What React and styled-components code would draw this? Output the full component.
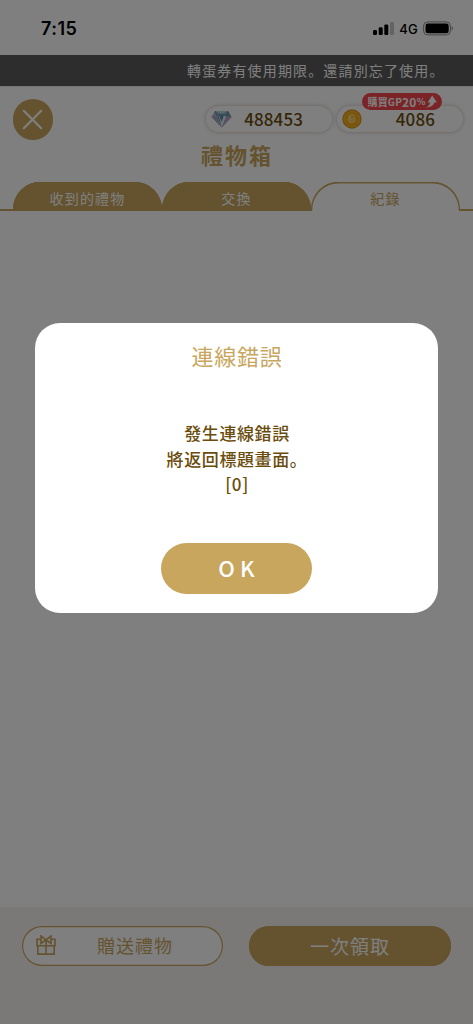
import React from "react";
import styled, { createGlobalStyle } from "styled-components";

const gold = "#c8a65d";
const brown = "#6b4c0c";

const GlobalStyle = createGlobalStyle`
  * { box-sizing: border-box; }
  body { margin: 0; background: #fff; }
  button { font: inherit; border: 0; padding: 0; margin: 0; }
`;

const Screen = styled.div`
  position: relative;
  display: flex;
  flex-direction: column;
  width: 473px;
  height: 1024px;
  overflow: hidden;
  background: #fff;
  font-family: "Noto Sans CJK JP", sans-serif;
  font-weight: 400;
`;

const StatusBar = styled.div`
  display: flex;
  align-items: center;
  justify-content: space-between;
  height: 55px;
  padding: 2px 19px 0 41px;
  font-family: Inter, sans-serif;
  color: #000;
`;
const Clock = styled.span`
  font-size: 18px;
  font-weight: 600;
  letter-spacing: 0.5px;
`;
const Signals = styled.div`
  display: flex;
  align-items: center;
  font-size: 13px;
  font-weight: 500;
`;
const Network = styled.span`
  margin: 0 5px 0 5px;
  letter-spacing: 0.2px;
`;

const Notice = styled.div`
  height: 31px;
  padding-left: 187px;
  background: #5a5a5a;
  color: #fff;
  font-size: 14px;
  line-height: 31px;
  letter-spacing: 1.15px;
  white-space: nowrap;
`;

const Header = styled.header`
  display: flex;
  flex-direction: column;
  height: 125px;
  border-top: 1px solid #ececec;
`;
const HeaderTop = styled.div`
  display: flex;
  align-items: flex-start;
  height: 53px;
  padding: 12px 10px 0 12.5px;
`;
const CloseButton = styled.button`
  display: grid;
  place-items: center;
  flex: none;
  width: 40.5px;
  height: 40.5px;
  margin-right: 153px;
  border-radius: 50%;
  background: ${gold};
`;
const Balance = styled.div`
  position: relative;
  display: flex;
  flex: none;
  align-items: center;
  width: 126px;
  height: 26px;
  margin-top: 7px;
  padding-left: 5px;
  border-radius: 13px;
  background: #fff;
  box-shadow: 0 0 4px rgba(120, 95, 65, 0.38);
  color: ${brown};
  font-size: 17px;
  font-weight: 500;
  line-height: 24px;
  letter-spacing: 0.1px;

  & + & {
    margin-left: 5px;
  }
`;
const Amount = styled.span`
  flex: 1;
  padding: 0 ${(p) => p.$inset}px 2px 0;
  line-height: 17px;
  text-align: right;
`;
const Promo = styled.div`
  position: absolute;
  top: -13px;
  left: 25px;
  display: flex;
  align-items: center;
  justify-content: center;
  width: 80px;
  height: 17px;
  border-radius: 9px;
  background: #f5484e;
  color: #fff;
  font-size: 10px;
  font-weight: 700;
  line-height: 12px;
  letter-spacing: 0.2px;
  white-space: nowrap;
`;
const Rate = styled.span`
  font-size: ${(p) => p.$size}px;
`;
const Title = styled.h1`
  margin: 0;
  height: 42px;
  padding-left: 1px;
  color: ${gold};
  font-size: 22px;
  font-weight: 700;
  line-height: 28px;
  letter-spacing: 2px;
  text-align: center;
`;

const Tabs = styled.nav`
  display: flex;
  align-items: flex-end;
  height: 29px;
`;
const TabRule = styled.span`
  width: ${(p) => p.$width}px;
  height: 2px;
  background: ${gold};
`;
const Tab = styled.button`
  width: 149px;
  height: 29px;
  padding-top: 3px;
  border-radius: 27px 27px 0 0;
  background: ${(p) => (p.$active ? "#fff" : gold)};
  box-shadow: inset 1.2px 1.2px ${gold}, inset -1.2px 1.2px ${gold};
  color: ${(p) => (p.$active ? gold : "#fff")};
  font-size: 14px;
  line-height: 24px;
  letter-spacing: 1.2px;
`;

const Content = styled.main`
  flex: 1;
`;

const Footer = styled.footer`
  display: flex;
  justify-content: space-between;
  align-items: flex-start;
  height: 117px;
  padding: 19px 22px;
  background: #f6f3f0;
`;
const FooterButton = styled.button`
  display: flex;
  align-items: center;
  justify-content: center;
  width: ${(p) => (p.$filled ? 202 : 201)}px;
  height: 40px;
  padding-bottom: 2px;
  border-radius: 20px;
  background: ${(p) => (p.$filled ? gold : "#fff")};
  box-shadow: inset 0 0 0 1.2px ${gold};
  color: ${(p) => (p.$filled ? "#fff" : gold)};
  font-size: ${(p) => (p.$filled ? 19 : 18)}px;
  letter-spacing: 1px;
`;
const GiftLabel = styled.span`
  margin: 0 36px 0 41px;
`;

const Overlay = styled.div`
  position: absolute;
  inset: 0;
  display: flex;
  justify-content: center;
  align-items: flex-start;
  padding-top: 323px;
  background: rgba(0, 0, 0, 0.5);
`;
const Dialog = styled.section`
  display: flex;
  flex-direction: column;
  align-items: center;
  width: 403px;
  height: 290px;
  border-radius: 25px;
  background: #fff;
`;
const DialogTitle = styled.h2`
  margin: 16px 0 0;
  padding: 0 0 1px 1px;
  color: ${gold};
  font-size: 22px;
  font-weight: 400;
  line-height: 33px;
  letter-spacing: 0.8px;
`;
const Message = styled.p`
  margin: 47px 0 0;
  padding-left: 1px;
  color: ${brown};
  font-size: 17px;
  font-weight: 500;
  line-height: 25.5px;
  letter-spacing: 0.6px;
  text-align: center;
  white-space: pre;
`;
const ConfirmButton = styled.button`
  width: 151px;
  height: 51px;
  margin-top: 46.5px;
  padding-bottom: 3px;
  border-radius: 26px;
  background: ${gold};
  color: #fff;
  font-size: 22px;
  font-weight: 500;
  line-height: 48px;
  letter-spacing: 0.1px;
`;

const CellularIcon = () => (
  <svg width="21" height="13" viewBox="0 0 21 13">
    <rect x="0" y="8" width="4" height="5" rx="1.2" />
    <rect x="5.7" y="5.3" width="4" height="7.7" rx="1.2" />
    <rect x="11.3" y="2.6" width="4" height="10.4" rx="1.2" />
    <rect x="17" y="0" width="4" height="13" rx="1.2" fill="#c7c7c7" />
  </svg>
);

const BatteryIcon = () => (
  <svg width="31" height="15" viewBox="0 0 31 15">
    <rect x=".6" y=".9" width="26.8" height="13" rx="4" fill="none" stroke="#888" strokeWidth="1" />
    <rect x="2.5" y="2.6" width="23.2" height="9.7" rx="2.3" />
    <path d="M28.7 5.3v4.2c1.7-.7 1.7-3.5 0-4.2z" fill="#888" />
  </svg>
);

const CloseIcon = () => (
  <svg width="21" height="21" viewBox="0 0 21 21" stroke="#fff" strokeWidth="2.2" strokeLinecap="round">
    <path d="M1.8 1.8 19.2 19.2M19.2 1.8 1.8 19.2" />
  </svg>
);

const DiamondIcon = () => (
  <svg width="21" height="18" viewBox="0 0 21 18">
    <path d="M4.2 1h12.7L20.5 7 10.7 17.5.6 7z" fill="#8badbf" />
    <path d="M4.2 1 .6 7 6 6.2z" fill="#c3a9c8" />
    <path d="m4.2 1 6.4 3.2L16.9 1z" fill="#b4d4dc" />
    <path d="M5.4 6.4h3l2.3 5.6 1.6-6h3l-4.6 11.5z" fill="#e2eff4" />
    <path d="m6 6.8 1.8 0 2.9 9z" fill="#547f9b" />
    <path d="m8.5 6.4 2.1-2 2 1.8-1.7 5.2z" fill="#5f8aa4" />
    <path d="m16.9 1-1.6 5.2 5.2.8z" fill="#7499b0" />
    <path d="m.6 7 4.9-.6 5.2 11.1z" fill="#a9a3bd" />
    <path d="m15.3 6.2 5.2.8-9.8 10.5z" fill="#b5a0bd" />
    <path d="m10.6 4-4.6 2.2L4.2 1M10.6 4l4.7 2.2L16.9 1" fill="none" stroke="#56869c" strokeWidth=".8" />
  </svg>
);

const CoinIcon = () => (
  <svg width="20" height="20" viewBox="0 0 20 20">
    <circle cx="10" cy="10" r="9.7" fill="#e09410" />
    <circle cx="10" cy="10" r="8" fill="#f3ad1c" stroke="#f8bf3a" strokeWidth=".8" />
    <path d="M10.5 5.2c-3 0-5 2.2-4.8 5 .2 2.4 1.8 4 4.2 4.3l3.6-2.3V9l-2-.6 1.7-1.5z" fill="#fbd368" />
    <path d="M9 8.4l2.6-.9M9.4 11.6l1.8-.7" fill="none" stroke="#e39c1c" strokeWidth="1" />
  </svg>
);

const RiseIcon = () => (
  <svg width="11" height="13" viewBox="0 0 11 13" fill="#fff">
    <path d="M6.2.5 11 7.4H8.2C7.9 10.2 4.6 12 0 12.5c2.4-1.2 3.8-2.8 4.1-5.1H1.6z" />
  </svg>
);

const GiftIcon = () => (
  <svg width="20" height="20" viewBox="0 0 20 20" fill="none" stroke={gold} strokeWidth="1.6">
    <path d="M4.8 4.3H1v6.5h18V4.3h-3.8M1.8 10.8v8.3h16.4v-8.3M10 5.5v13.5" />
    <path d="M10 4.8 5 1v7.4l5-3.6 5 3.6V1z" />
  </svg>
);

export default function App() {
  return (
    <Screen lang="ja">
      <GlobalStyle />
      <StatusBar>
        <Clock>7:15</Clock>
        <Signals>
          <CellularIcon />
          <Network>4G</Network>
          <BatteryIcon />
        </Signals>
      </StatusBar>
      <Notice>轉蛋券有使用期限。還請別忘了使用。</Notice>
      <Header>
        <HeaderTop>
          <CloseButton aria-label="關閉"><CloseIcon /></CloseButton>
          <Balance>
            <DiamondIcon />
            <Amount $inset={29}>488453</Amount>
          </Balance>
          <Balance>
            <CoinIcon />
            <Amount $inset={28}>4086</Amount>
            <Promo>
              購買GP<Rate $size={12}>20</Rate><Rate $size={9}>%</Rate><RiseIcon />
            </Promo>
          </Balance>
        </HeaderTop>
        <Title>禮物箱</Title>
        <Tabs>
          <TabRule $width={13} />
          <Tab>收到的禮物</Tab>
          <Tab>交換</Tab>
          <Tab $active>紀錄</Tab>
          <TabRule $width={13} />
        </Tabs>
      </Header>
      <Content />
      <Footer>
        <FooterButton>
          <GiftIcon />
          <GiftLabel>贈送禮物</GiftLabel>
        </FooterButton>
        <FooterButton $filled>一次領取</FooterButton>
      </Footer>
      <Overlay>
        <Dialog role="dialog" aria-modal="true">
          <DialogTitle>連線錯誤</DialogTitle>
          <Message>{"發生連線錯誤\n將返回標題畫面。\n[0]"}</Message>
          <ConfirmButton>O K</ConfirmButton>
        </Dialog>
      </Overlay>
    </Screen>
  );
}
